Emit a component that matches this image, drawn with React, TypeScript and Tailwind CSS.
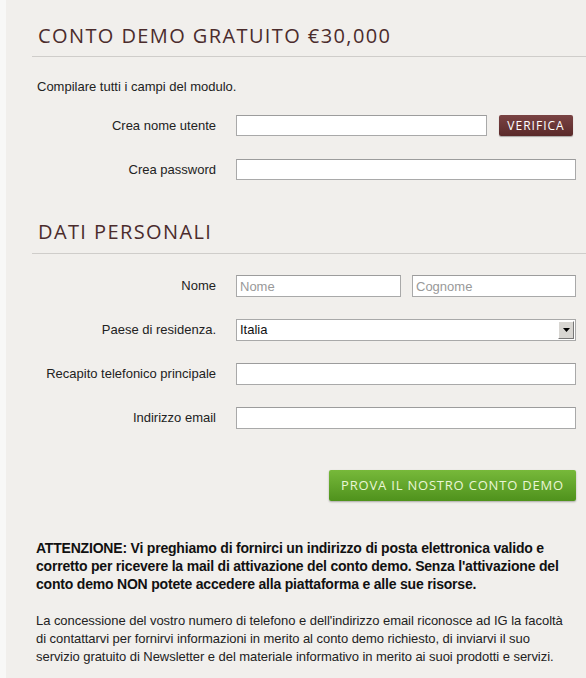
import React from "react";

const inputCls =
  "h-[21px] border border-[#a9a9a9] border-t-[#9c9c9c] bg-white px-[3px] text-[13px] text-[#222] outline-none placeholder:text-[#999]";

function Row({ label, children, mt }: { label: string; children: React.ReactNode; mt: string }) {
  return (
    <div className={`flex items-center ${mt}`}>
      <div className="w-[210px] shrink-0 text-right text-[13px] text-[#222]">{label}</div>
      <div className="ml-[20px] flex flex-1 items-center">{children}</div>
    </div>
  );
}

export default function App() {
  return (
    <div
      className="flex min-h-[678px] w-[586px] bg-[#f1efec]"
      style={{ fontFamily: '"Liberation Sans", Arial, sans-serif' }}
    >
      <div className="w-[6px] shrink-0 bg-[#f8f8f7]" />
      <div className="w-[580px]">
        <h1
          className="mt-[24px] ml-[32px] text-[20px] leading-[24px] tracking-[1.4px] text-[#4b2c2c]"
          style={{ fontFamily: '"Open Sans", sans-serif' }}
        >
          CONTO DEMO GRATUITO €30,000
        </h1>
        <div className="mt-[8px] ml-[26px] h-px bg-[#cfcdca]" />
        <p className="mt-[22px] ml-[31px] text-[13px] leading-[16px] text-[#222]">
          Compilare tutti i campi del modulo.
        </p>
        <Row label="Crea nome utente" mt="mt-[20px]">
          <input className={`${inputCls} w-[251px]`} />
          <button
            className="ml-[12px] h-[21px] w-[74px] rounded-[2px] bg-gradient-to-b from-[#7a4343] to-[#5a2a2a] text-[12px] tracking-[1px] text-white shadow-[0_1px_1px_rgba(0,0,0,0.3)]"
            style={{ fontFamily: '"Open Sans", sans-serif' }}
          >
            VERIFICA
          </button>
        </Row>
        <Row label="Crea password" mt="mt-[23px]">
          <input type="password" className={`${inputCls} w-[340px]`} />
        </Row>
        <h2
          className="mt-[40px] ml-[32px] text-[20px] leading-[24px] tracking-[1.4px] text-[#4b2c2c]"
          style={{ fontFamily: '"Open Sans", sans-serif' }}
        >
          DATI PERSONALI
        </h2>
        <div className="mt-[9px] ml-[26px] h-px bg-[#cfcdca]" />
        <Row label="Nome" mt="mt-[21px]">
          <input placeholder="Nome" className={`${inputCls} h-[22px] w-[165px]`} />
          <input placeholder="Cognome" className={`${inputCls} ml-[11px] h-[22px] w-[164px]`} />
        </Row>
        <Row label="Paese di residenza." mt="mt-[22px]">
          <div className="flex h-[22px] w-[340px] items-center border border-[#a9a9a9] bg-white">
            <span className="flex-1 pl-[3px] text-[13px] text-[#111]">Italia</span>
            <div className="mr-px flex h-[18px] w-[16px] items-center justify-center border border-t-white border-l-white border-r-[#777] border-b-[#777] bg-[#d8d6d2]">
              <svg width="7" height="4" viewBox="0 0 7 4">
                <path d="M0 0h7L3.5 4z" fill="#000" />
              </svg>
            </div>
          </div>
        </Row>
        <Row label="Recapito telefonico principale" mt="mt-[22px]">
          <input className={`${inputCls} h-[22px] w-[340px]`} />
        </Row>
        <Row label="Indirizzo email" mt="mt-[22px]">
          <input className={`${inputCls} h-[22px] w-[340px]`} />
        </Row>
        <div className="mt-[41px] flex pl-[323px]">
          <button
            className="h-[31px] w-[247px] rounded-[2px] bg-gradient-to-b from-[#77b93a] to-[#4f921c] text-[13px] tracking-[0.8px] text-[#eaf6d6] shadow-[0_1px_2px_rgba(0,0,0,0.3)]"
            style={{ fontFamily: '"Open Sans", sans-serif' }}
          >
            PROVA IL NOSTRO CONTO DEMO
          </button>
        </div>
        <p className="mt-[38px] ml-[30px] w-[536px] text-[14px] font-bold leading-[18px] tracking-[-0.2px] text-[#111]">
          ATTENZIONE: Vi preghiamo di fornirci un indirizzo di posta elettronica valido e corretto per
          ricevere la mail di attivazione del conto demo. Senza l'attivazione del conto demo NON
          potete accedere alla piattaforma e alle sue risorse.
        </p>
        <p className="mt-[19px] ml-[30px] w-[540px] whitespace-nowrap text-[13px] leading-[18px] tracking-[-0.05px] text-[#222]">
          La concessione del vostro numero di telefono e dell'indirizzo email riconosce ad IG la facoltà
          <br />
          di contattarvi per fornirvi informazioni in merito al conto demo richiesto, di inviarvi il suo
          <br />
          servizio gratuito di Newsletter e del materiale informativo in merito ai suoi prodotti e servizi.
        </p>
      </div>
    </div>
  );
}
